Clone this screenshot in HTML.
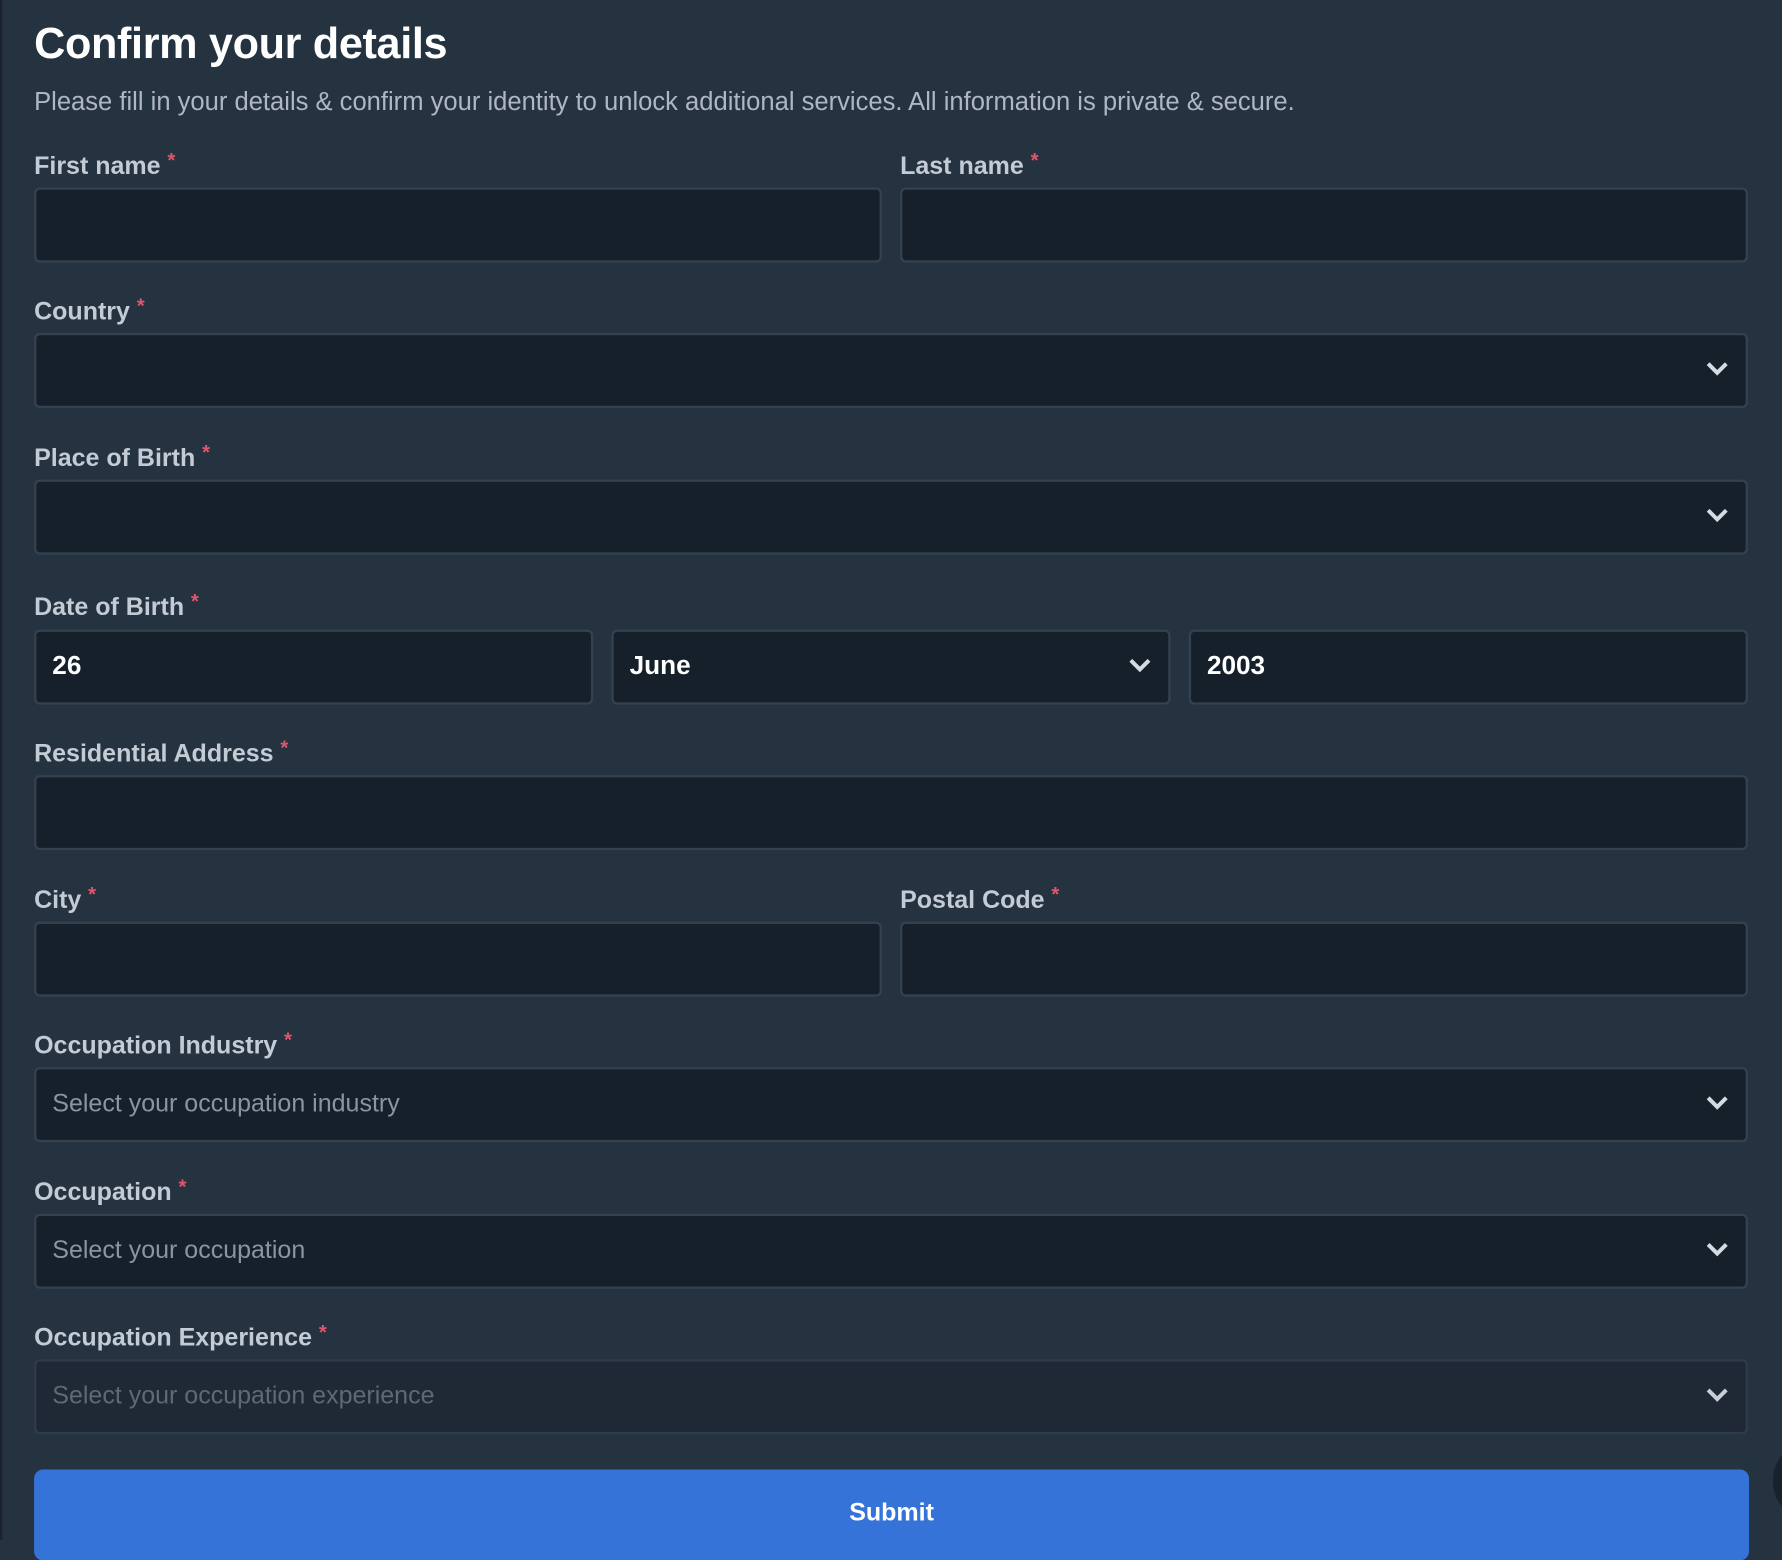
<!DOCTYPE html>
<html><head><meta charset="utf-8"><style>
html,body{margin:0;padding:0;width:1782px;height:1540px;overflow:hidden;background:#253240;}
#w{position:absolute;left:0;top:0;width:1568px;height:1355px;transform:scale(1.13648);transform-origin:0 0;font-family:"Liberation Sans",sans-serif;}
.edge{position:absolute;left:0;top:0;width:2px;height:1355px;background:#1a232d;}
h1{position:absolute;left:30px;top:18px;margin:0;font-size:38px;font-weight:bold;color:#fff;letter-spacing:-0.3px;}
.sub{position:absolute;left:30px;top:77px;font-size:22.5px;color:#aeb7c2;white-space:nowrap;}
.lab{position:absolute;font-size:22px;font-weight:bold;color:#c3cbd5;white-space:nowrap;}
.lab span{color:#e0566c;font-size:18px;vertical-align:6px;margin-left:6px;}
.in{position:absolute;height:62px;background:#15202b;border:2px solid #35414e;border-radius:5px;box-sizing:content-box;}
.in .t{position:absolute;left:14px;top:16px;font-size:23px;font-weight:bold;color:#fff;}
.in .p{position:absolute;left:14px;top:17px;font-size:22px;color:#8b95a1;}
.in svg{position:absolute;right:14px;top:22px;}
.btn{position:absolute;left:30px;top:1293px;width:1509px;height:80px;background:#3573d9;border-radius:8px;color:#fff;font-weight:bold;font-size:22px;text-align:center;line-height:76px;}
</style></head><body><div id="w">
<div class="edge"></div>
<h1>Confirm your details</h1>
<div class="sub">Please fill in your details &amp; confirm your identity to unlock additional services. All information is private &amp; secure.</div>

<div class="lab" style="left:30px;top:131px">First name<span>*</span></div>
<div class="lab" style="left:792px;top:131px">Last name<span>*</span></div>
<div class="in" style="left:30px;top:165px;width:742px"></div>
<div class="in" style="left:792px;top:165px;width:742px"></div>

<div class="lab" style="left:30px;top:259px">Country<span>*</span></div>
<div class="in" style="left:30px;top:293px;width:1504px"><svg width="22" height="14" viewBox="0 0 22 14"><path d="M3 3l8 8 8-8" stroke="#d5dbe2" stroke-width="3.5" fill="none"/></svg></div>

<div class="lab" style="left:30px;top:388px">Place of Birth<span>*</span></div>
<div class="in" style="left:30px;top:422px;width:1504px"><svg width="22" height="14" viewBox="0 0 22 14"><path d="M3 3l8 8 8-8" stroke="#d5dbe2" stroke-width="3.5" fill="none"/></svg></div>

<div class="lab" style="left:30px;top:519px">Date of Birth<span>*</span></div>
<div class="in" style="left:30px;top:554px;width:488px"><div class="t">26</div></div>
<div class="in" style="left:538px;top:554px;width:488px"><div class="t">June</div><svg width="22" height="14" viewBox="0 0 22 14"><path d="M3 3l8 8 8-8" stroke="#d5dbe2" stroke-width="3.5" fill="none"/></svg></div>
<div class="in" style="left:1046px;top:554px;width:488px"><div class="t">2003</div></div>

<div class="lab" style="left:30px;top:648px">Residential Address<span>*</span></div>
<div class="in" style="left:30px;top:682px;width:1504px"></div>

<div class="lab" style="left:30px;top:777px">City<span>*</span></div>
<div class="lab" style="left:792px;top:777px">Postal Code<span>*</span></div>
<div class="in" style="left:30px;top:811px;width:742px"></div>
<div class="in" style="left:792px;top:811px;width:742px"></div>

<div class="lab" style="left:30px;top:905px">Occupation Industry<span>*</span></div>
<div class="in" style="left:30px;top:939px;width:1504px"><div class="p">Select your occupation industry</div><svg width="22" height="14" viewBox="0 0 22 14"><path d="M3 3l8 8 8-8" stroke="#d5dbe2" stroke-width="3.5" fill="none"/></svg></div>

<div class="lab" style="left:30px;top:1034px">Occupation<span>*</span></div>
<div class="in" style="left:30px;top:1068px;width:1504px"><div class="p">Select your occupation</div><svg width="22" height="14" viewBox="0 0 22 14"><path d="M3 3l8 8 8-8" stroke="#d5dbe2" stroke-width="3.5" fill="none"/></svg></div>

<div class="lab" style="left:30px;top:1162px">Occupation Experience<span>*</span></div>
<div class="in" style="left:30px;top:1196px;width:1504px;background:#1e2935;border-color:#2f3b48"><div class="p" style="color:#5e6975">Select your occupation experience</div><svg width="22" height="14" viewBox="0 0 22 14"><path d="M3 3l8 8 8-8" stroke="#c8cfd7" stroke-width="3.5" fill="none"/></svg></div>

<div class="btn">Submit</div>
<div style="position:absolute;left:1560px;top:1275px;width:40px;height:56px;border-radius:50%;background:#18222d"></div>
</div></body></html>
